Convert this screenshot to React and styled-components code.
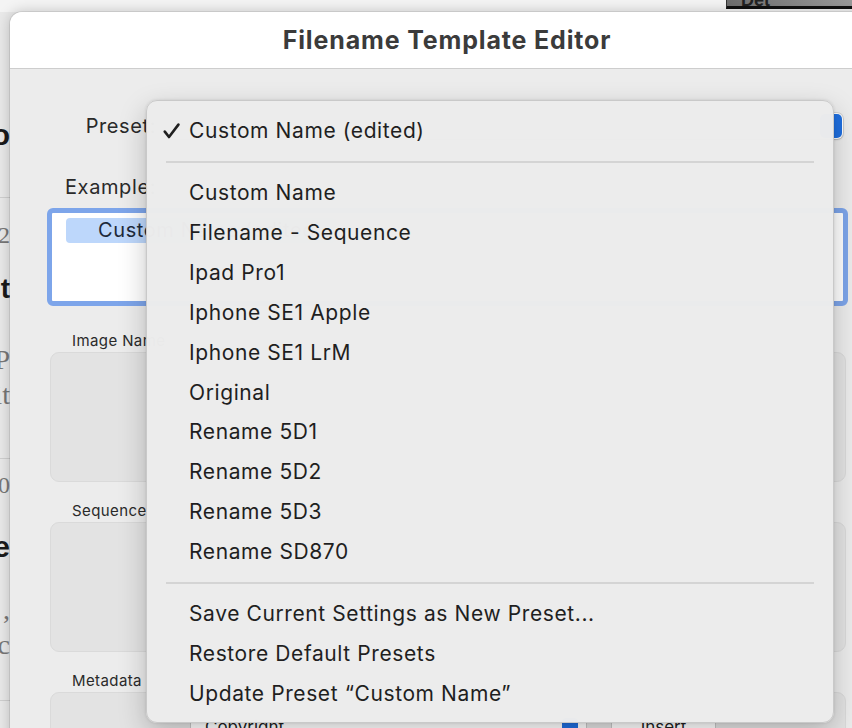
import styled, { createGlobalStyle } from "styled-components";

const GlobalStyle = createGlobalStyle`
  html, body {
    margin: 0;
    padding: 0;
    background: #ececec;
  }
  body {
    font-family: "Inter", "Noto Sans", sans-serif;
    -webkit-font-smoothing: antialiased;
  }
`;

const Page = styled.div`
  position: relative;
  width: 852px;
  height: 728px;
  overflow: hidden;
  background: #e9e9e9;
`;

/* ---------- page behind the sheet ---------- */

const BackTop = styled.div`
  height: 12px;
  display: flex;
  justify-content: flex-end;
  background: #f4f4f4;
`;

const DarkTab = styled.div`
  width: 126px;
  height: 9px;
  overflow: hidden;
  background: linear-gradient(90deg, #6f6f6f, #9a9a9a);
  border-bottom: 3px solid #111;
  border-left: 1px solid #333;
  color: #222;
  font: 700 18px "Liberation Sans", sans-serif;
  line-height: 0;
  padding-left: 14px;
  box-sizing: border-box;
`;

const BackColumn = styled.div`
  display: flex;
  flex-direction: column;
  width: 10px;
`;

const BackRow = styled.div`
  margin-top: ${(p) => p.$mt}px;
  height: 30px;
  display: flex;
  align-items: center;
  justify-content: flex-end;
  overflow: hidden;
  white-space: nowrap;
  font-family: ${(p) => (p.$serif ? '"Liberation Serif", serif' : '"Liberation Sans", sans-serif')};
  font-weight: ${(p) => (p.$bold ? 700 : 400)};
  font-size: ${(p) => p.$size}px;
  color: ${(p) => (p.$serif ? "#777" : "#1a1a1a")};
`;

const BackRule = styled.div`
  margin-top: ${(p) => p.$mt}px;
  height: 1px;
  background: #cfcfcf;
`;

/* ---------- sheet ---------- */

const Sheet = styled.div`
  position: absolute;
  left: 10px;
  top: 12px;
  width: 874px;
  height: 760px;
  background: #ececec;
  border-radius: 12px 12px 0 0;
  box-shadow: 0 0 14px rgba(0, 0, 0, 0.22), 0 0 0 1px rgba(0, 0, 0, 0.08);
  display: flex;
  flex-direction: column;
`;

const TitleBar = styled.div`
  height: 56px;
  flex: none;
  background: #fff;
  border-radius: 12px 12px 0 0;
  border-bottom: 1px solid #cdcdcd;
  display: flex;
  align-items: center;
  justify-content: center;
`;

const Title = styled.h1`
  margin: 0;
  font: 700 25px "Inter", sans-serif;
  color: #3b3b3b;
  letter-spacing: 0.85px;
`;

const Body = styled.div`
  display: flex;
  flex-direction: column;
  padding: 44px 41px 0 37px;
`;

const FieldRow = styled.div`
  display: flex;
  align-items: center;
  gap: 4px;
`;

const FieldLabel = styled.label`
  width: 109px;
  text-align: right;
  font-size: 20px;
  letter-spacing: 0.6px;
  color: #2a2a2a;
  flex: none;
`;

const Popup = styled.div`
  flex: 1;
  height: 26px;
  background: #fff;
  border-radius: 6px;
  box-shadow: 0 0 0 1px rgba(0, 0, 0, 0.1), 0 1px 2px rgba(0, 0, 0, 0.15);
  display: flex;
  justify-content: flex-end;
  overflow: hidden;
`;

const PopupArrow = styled.div`
  width: 22px;
  background: #1f6fe0;
  border-radius: 5px;
  margin: 1px;
`;

const ExampleLabel = styled.div`
  margin: 36px 0 0 18px;
  font-size: 20px;
  letter-spacing: 0.6px;
  color: #2a2a2a;
  line-height: 24px;
`;

const ExampleBox = styled.div`
  margin-top: 9px;
  width: 801px;
  height: 98px;
  box-sizing: border-box;
  border: 5px solid #7da5ea;
  border-radius: 6px;
  background: #fff;
  padding: 5px 14px;
`;

const Token = styled.span`
  display: inline-block;
  background: #bdd7fb;
  border-radius: 4px;
  padding: 1px 14px 1px 32px;
  font-size: 20px;
  letter-spacing: 0.6px;
  line-height: 23px;
  color: #1e2a3a;
`;

const Group = styled.section`
  display: flex;
  flex-direction: column;
  margin: ${(p) => p.$gap}px -3px 0 0;
  padding-left: 3px;
`;

const GroupLabel = styled.div`
  font-size: 15px;
  letter-spacing: 0.4px;
  line-height: 18px;
  color: #2a2a2a;
  margin-left: 22px;
`;

const GroupBox = styled.div`
  margin-top: 2px;
  height: 130px;
  background: #e3e3e3;
  border: 1px solid #dadada;
  border-radius: 9px;
  display: flex;
  align-items: flex-start;
  padding: 24px 0 0 140px;
  gap: 26px;
  box-sizing: border-box;
`;

const SmallPopup = styled.div`
  width: 395px;
  height: 24px;
  background: #fff;
  border-radius: 5px;
  box-shadow: 0 0 0 1px rgba(0, 0, 0, 0.12);
  display: flex;
  padding-left: 14px;
  font-size: 17px;
  color: #222;
  box-sizing: border-box;
`;

const SmallArrow = styled.div`
  width: 16px;
  margin: 1px 8px 1px auto;
  background: #1f6fe0;
  border-radius: 4px;
`;

const PushButton = styled.div`
  width: 103px;
  height: 24px;
  background: #fff;
  border-radius: 5px;
  box-shadow: 0 0 0 1px rgba(0, 0, 0, 0.12);
  font-size: 17px;
  color: #222;
  text-align: center;
`;

/* ---------- popup menu ---------- */

const Menu = styled.div`
  position: absolute;
  left: 146px;
  top: 100px;
  width: 688px;
  height: 623px;
  box-sizing: border-box;
  padding: 10px 0 9px;
  background: rgba(236, 236, 236, 0.99);
  border: 1px solid #c9c9c9;
  border-radius: 11px;
  box-shadow: 0 10px 28px rgba(0, 0, 0, 0.22), 0 0 3px rgba(0, 0, 0, 0.12);
  display: flex;
  flex-direction: column;
`;

const Item = styled.div`
  height: 40px;
  display: flex;
  align-items: center;
  padding-left: 16px;
  font-size: 21px;
  letter-spacing: 0.6px;
  color: #1f1f1f;
  white-space: nowrap;
`;

const CheckSlot = styled.span`
  width: 26px;
  display: flex;
  align-items: center;
`;

const Separator = styled.div`
  height: 22px;
  display: flex;
  align-items: center;
  padding: 0 19px;
  &::after {
    content: "";
    flex: 1;
    height: 2px;
    background: #d4d4d4;
  }
`;

const Check = () => (
  <svg width="17" height="16" viewBox="0 0 17 16">
    <path d="M1.8 8.6 L6 14 L15.4 1.6" fill="none" stroke="#1f1f1f" strokeWidth="2.6" strokeLinecap="round" strokeLinejoin="round" />
  </svg>
);

const presets = [
  "Custom Name",
  "Filename - Sequence",
  "Ipad Pro1",
  "Iphone SE1 Apple",
  "Iphone SE1 LrM",
  "Original",
  "Rename 5D1",
  "Rename 5D2",
  "Rename 5D3",
  "Rename SD870",
];

const actions = [
  "Save Current Settings as New Preset...",
  "Restore Default Presets",
  "Update Preset \u201CCustom Name\u201D",
];

const MenuItem = ({ checked, children }) => (
  <Item>
    <CheckSlot>{checked && <Check />}</CheckSlot>
    {children}
  </Item>
);

const App = () => {
  return (
    <Page>
      <GlobalStyle />
      <BackTop>
        <DarkTab>Det</DarkTab>
      </BackTop>
      <BackColumn>
        <BackRow $mt={108} $size={30} $bold>Pro</BackRow>
        <BackRule $mt={47} />
        <BackRow $mt={22} $size={24} $serif>2</BackRow>
        <BackRow $mt={24} $size={28} $bold>st</BackRow>
        <BackRow $mt={41} $size={28} $serif>P</BackRow>
        <BackRow $mt={5} $size={28} $serif>it</BackRow>
        <BackRule $mt={48} />
        <BackRow $mt={11} $size={24} $serif>20</BackRow>
        <BackRow $mt={32} $size={30} $bold>e</BackRow>
        <BackRow $mt={33} $size={28} $serif>,</BackRow>
        <BackRow $mt={5} $size={28} $serif>c</BackRow>
        <BackRule $mt={40} />
      </BackColumn>

      <Sheet>
        <TitleBar>
          <Title>Filename Template Editor</Title>
        </TitleBar>
        <Body>
          <FieldRow>
            <FieldLabel>Preset:</FieldLabel>
            <Popup>
              <PopupArrow />
            </Popup>
          </FieldRow>

          <ExampleLabel>Example:</ExampleLabel>
          <ExampleBox>
            <Token>Custom Name (edited)</Token>
          </ExampleBox>

          <Group $gap={26}>
            <GroupLabel>Image Name</GroupLabel>
            <GroupBox />
          </Group>
          <Group $gap={20}>
            <GroupLabel>Sequence</GroupLabel>
            <GroupBox />
          </Group>
          <Group $gap={20}>
            <GroupLabel>Metadata</GroupLabel>
            <GroupBox>
              <SmallPopup>
                Copyright
                <SmallArrow />
              </SmallPopup>
              <PushButton>Insert</PushButton>
            </GroupBox>
          </Group>
        </Body>
      </Sheet>

      <Menu>
        <MenuItem checked>Custom Name (edited)</MenuItem>
        <Separator />
        {presets.map((p) => (
          <MenuItem key={p}>{p}</MenuItem>
        ))}
        <Separator />
        {actions.map((a) => (
          <MenuItem key={a}>{a}</MenuItem>
        ))}
      </Menu>
    </Page>
  );
};

export default App;
